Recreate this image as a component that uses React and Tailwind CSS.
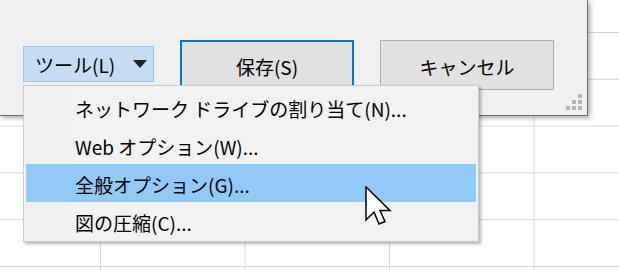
import React from 'react'

const font = { fontFamily: '"Noto Sans CJK JP", "Noto Sans", sans-serif' }

const items = [
  'ネットワーク ドライブの割り当て(N)...',
  'Web オプション(W)...',
  '全般オプション(G)...',
  '図の圧縮(C)...',
]

function Grip() {
  // resize grip dots, bottom-right of the dialog
  const dots = [
    [12, 0],
    [6, 6], [12, 6],
    [0, 12], [6, 12], [12, 12],
  ]
  return (
    <svg className="absolute right-[5px] bottom-[5px]" width="16" height="16" viewBox="0 0 16 16">
      {dots.map(([x, y], i) => (
        <rect key={i} x={x} y={y} width="4" height="4" fill="#b4b4b4" />
      ))}
    </svg>
  )
}

function Cursor() {
  return (
    <svg className="absolute left-[365px] top-[186px]" width="28" height="42" viewBox="0 0 28 42">
      <path
        d="M1 1 L1 34 L9 26 L14 38 L20 35.5 L15 24.5 L25 24.5 Z"
        fill="#fff"
        stroke="#000"
        strokeWidth="1.5"
        strokeLinejoin="miter"
      />
    </svg>
  )
}

export default function App() {
  return (
    <div
      className="relative w-[619px] h-[270px] overflow-hidden bg-white text-black bg-[linear-gradient(to_right,#d6d6d6_1px,transparent_1px),linear-gradient(to_bottom,#d6d6d6_1px,transparent_1px)] bg-[size:144.5px_46.8px] bg-[position:100px_32px]"
      style={font}
    >
      {/* Dialog */}
      <div className="absolute left-0 top-0 w-[588px] h-[116px] bg-[#f0f0f0] border-r border-b border-[#6e6e6e] shadow-[2px_2px_5px_rgba(0,0,0,0.35)]">
        <div className="flex items-center gap-[26px] pl-[23px] pt-[40px] h-[90px]">
          <button className="flex items-center w-[131px] h-[36px] mb-[2px] pl-[11px] bg-[#c4ddf5] border border-[#99c9f0] text-[19px] leading-none">
            <span>ツール(L)</span>
            <svg className="ml-[18px]" width="14" height="8" viewBox="0 0 14 8">
              <polygon points="0,0 14,0 7,8" fill="#222" />
            </svg>
          </button>
          <button className="w-[174px] h-[50px] pt-[2px] bg-[#e1e1e1] border-2 border-[#0078d7] text-[19px] leading-none">
            保存(S)
          </button>
          <button className="w-[174px] h-[50px] pt-[2px] bg-[#e1e1e1] border border-[#adadad] text-[19px] leading-none">
            キャンセル
          </button>
        </div>
        <Grip />
      </div>

      {/* Dropdown menu */}
      <div className="absolute left-[23px] top-[85px] w-[456px] bg-[#f2f2f2] border border-[#cccccc] p-[2px] pb-[1px] shadow-[2px_2px_3px_rgba(0,0,0,0.3)]">
        <div className="flex flex-col">
          {items.map((label, i) => (
            <div
              key={label}
              className={
                i === 2
                  ? 'flex items-center h-[38px] pl-[49px] pt-[2px] bg-[#91c9f7] text-[19px] leading-none whitespace-nowrap'
                  : 'flex items-center h-[38px] pl-[49px] pt-[2px] text-[19px] leading-none whitespace-nowrap bg-[linear-gradient(to_right,#f0f0f0_44px,transparent_44px)]'
              }
            >
              {label}
            </div>
          ))}
        </div>
      </div>

      <Cursor />
    </div>
  )
}
